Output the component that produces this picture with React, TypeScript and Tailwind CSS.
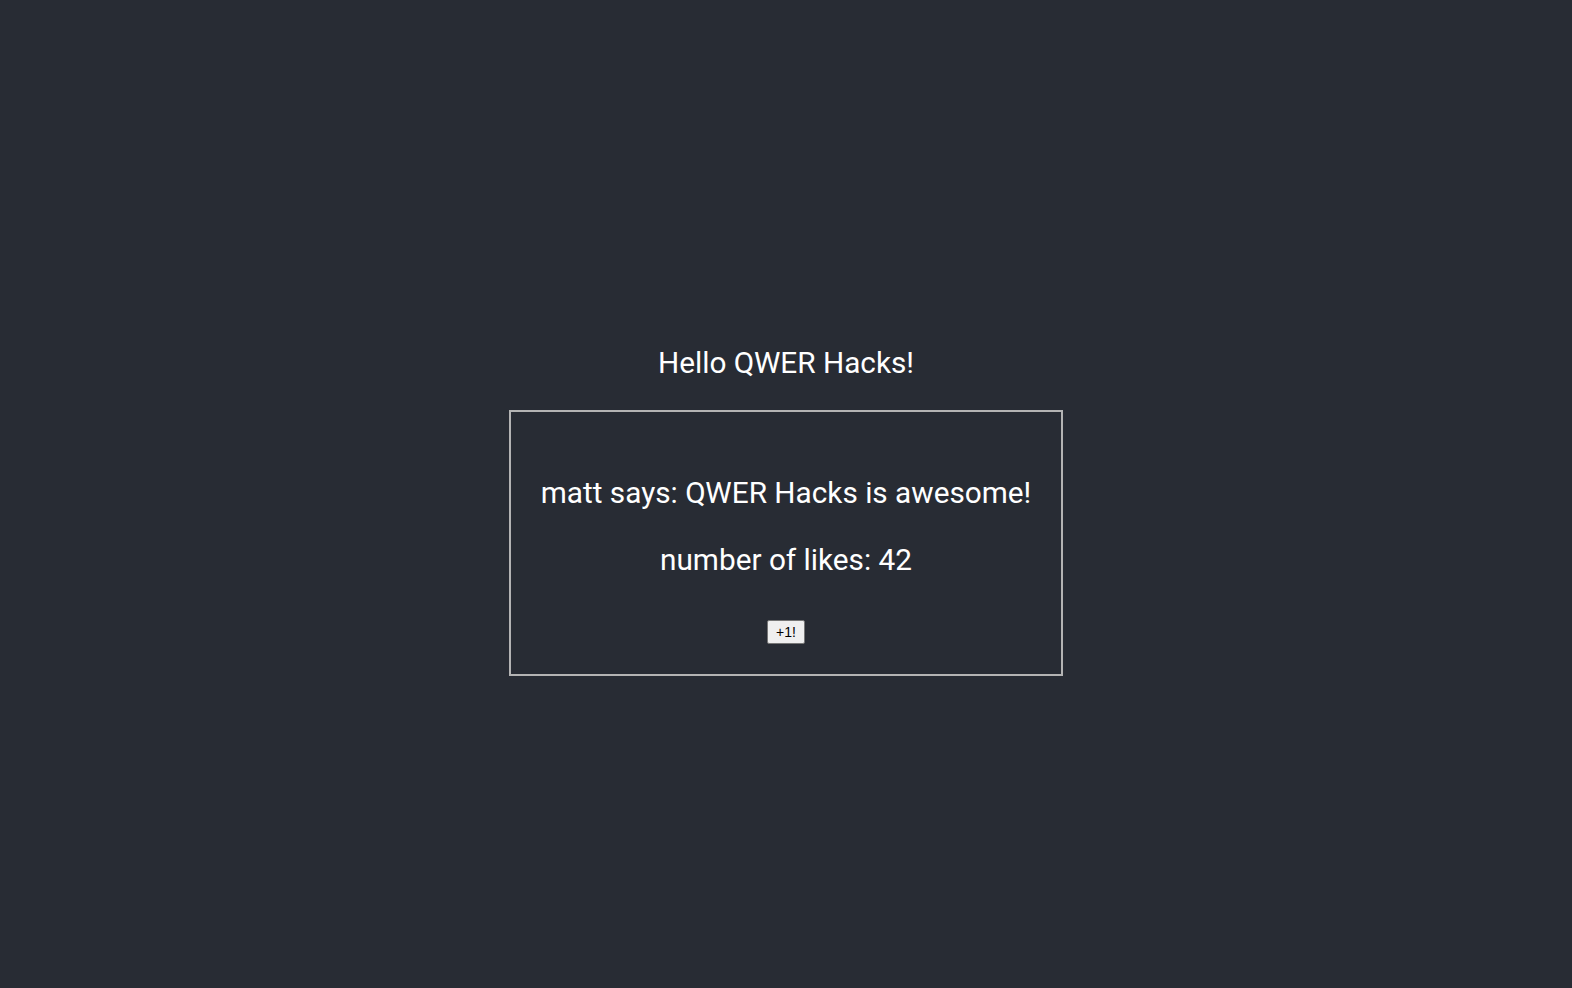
export default function App() {
    return (
        <div className="min-h-screen bg-[#282c34] text-white flex flex-col items-center pt-[344px] font-['Roboto',sans-serif]">
            {/* Title */}
            <h1 className="text-[29.76px] leading-[38px] font-normal">
                Hello QWER Hacks!
            </h1>

            {/* Post card */}
            <div className="mt-[28px] w-[554px] h-[266px] border-2 border-[#b4b4b4] flex flex-col items-center pt-[63px]">
                <p className="text-[29.76px] leading-[36px]">matt says: QWER Hacks is awesome!</p>
                <p className="mt-[31px] text-[29.76px] leading-[36px]">number of likes: 42</p>
                <button className="mt-[42px] h-[24px] w-[38px] bg-[#efefef] text-black text-[14px] border border-[#767676] rounded-[2px] font-['Liberation_Sans',sans-serif] leading-none">
                    +1!
                </button>
            </div>
        </div>
    );
}
